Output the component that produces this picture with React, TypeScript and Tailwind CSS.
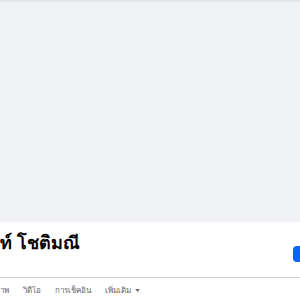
export default function App() {
  const tabs = ["าพ", "วิดีโอ", "การเช็คอิน"];
  return (
    <div className="h-[300px] w-[300px] overflow-hidden bg-white font-['Noto_Sans','Liberation_Sans',sans-serif]">
      <div className="h-[2px] bg-[#e4e6eb]" />
      <div className="h-[220px] bg-[#f0f2f5]" />
      <div className="flex h-[55px] items-start justify-between">
        <h1 className="mt-[8px] text-[18px] font-bold leading-[25px] text-[#050505]">ท์ โชติมณี</h1>
        <button className="mr-[-10px] mt-[24px] h-[16px] w-[17px] rounded-[4px] bg-[#0866ff]" />
      </div>
      <div className="flex h-[23px] items-center gap-[14px] border-t border-[#ced0d4] pt-[2px] text-[8px] text-[#65676b]">
        {tabs.map((t) => (
          <span key={t} className="leading-none">
            {t}
          </span>
        ))}
        <span className="flex items-center gap-[4px] leading-none">
          เพิ่มเติม
          <svg width="5" height="3" viewBox="0 0 6 4">
            <path d="M0 0h6L3 4z" fill="#65676b" />
          </svg>
        </span>
      </div>
    </div>
  );
}
